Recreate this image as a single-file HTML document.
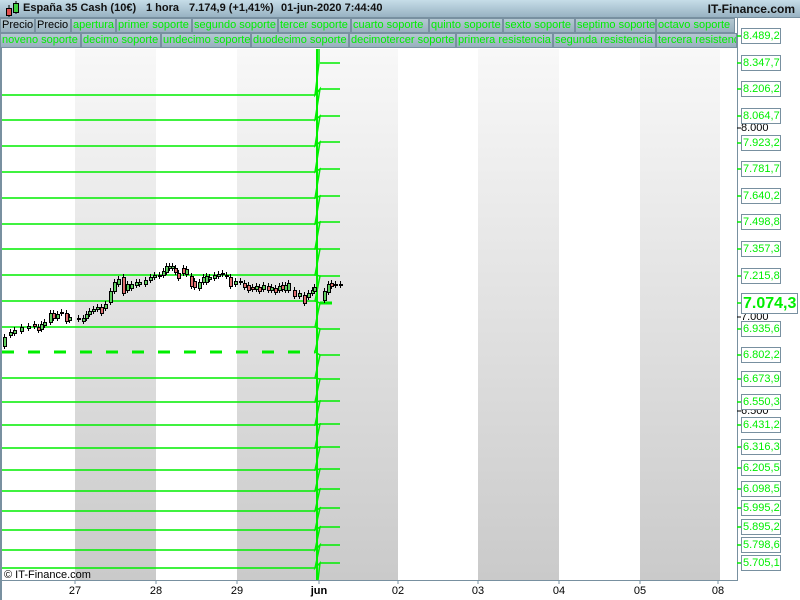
<!DOCTYPE html>
<html><head><meta charset="utf-8"><style>
*{margin:0;padding:0;box-sizing:border-box}
body{width:800px;height:600px;overflow:hidden;background:#fff;font-family:"Liberation Sans",sans-serif;position:relative}
.hdr{position:absolute;left:0;top:0;width:800px;height:18px;background:linear-gradient(#c6dde8,#98b2c2);border-bottom:1px solid #7890a0}
.hdr .t{position:absolute;top:2px;font-size:11px;font-weight:bold;color:#111;white-space:pre}
.hdr .r{position:absolute;right:5px;top:2px;font-size:12px;font-weight:bold;color:#111}
.cell{position:absolute;height:15px;background:linear-gradient(#b4c8d2,#98b0be);border:1px solid #7890a0;font-size:11px;line-height:13px;color:#00ee00;padding-left:1px;white-space:nowrap;overflow:hidden}
.lb{position:absolute;left:741px;width:40px;height:16px;border:1px solid #7890a0;background:#fff;font-size:11px;line-height:14px;color:#00ee00;padding-left:1px}
.ax{position:absolute;left:741px;font-size:11px;color:#000}
.dl{position:absolute;top:585px;font-size:11px;color:#000;transform:translateX(-50%)}
</style></head><body>
<svg width="800" height="600" style="position:absolute;left:0;top:0">
<defs><linearGradient id="g" x1="0" y1="0" x2="0" y2="1"><stop offset="0" stop-color="#f8f8f8"/><stop offset="1" stop-color="#cacaca"/></linearGradient></defs>
<rect x="75" y="49" width="81" height="531" fill="url(#g)"/>
<rect x="237" y="49" width="161" height="531" fill="url(#g)"/>
<rect x="478" y="49" width="81" height="531" fill="url(#g)"/>
<rect x="640" y="49" width="80" height="531" fill="url(#g)"/>
<line x1="1" y1="18" x2="1" y2="600" stroke="#7890a0" stroke-width="2"/>
<line x1="737.5" y1="18" x2="737.5" y2="580" stroke="#7890a0"/>
<line x1="0" y1="580.5" x2="738" y2="580.5" stroke="#7890a0"/>
<g stroke="#7890a0">
<line x1="75" y1="580" x2="75" y2="584"/><line x1="156" y1="580" x2="156" y2="584"/><line x1="237" y1="580" x2="237" y2="584"/><line x1="319" y1="580" x2="319" y2="584"/><line x1="398" y1="580" x2="398" y2="584"/><line x1="478" y1="580" x2="478" y2="584"/><line x1="559" y1="580" x2="559" y2="584"/><line x1="640" y1="580" x2="640" y2="584"/><line x1="718" y1="580" x2="718" y2="584"/>
</g>
<g stroke="#00ee00" stroke-width="1.5">
<line x1="2" x2="315" y1="95" y2="95"/><line x1="2" x2="315" y1="120" y2="120"/><line x1="2" x2="315" y1="146" y2="146"/><line x1="2" x2="315" y1="172" y2="172"/><line x1="2" x2="315" y1="198" y2="198"/><line x1="2" x2="315" y1="224" y2="224"/><line x1="2" x2="315" y1="249" y2="249"/><line x1="2" x2="315" y1="275" y2="275"/><line x1="2" x2="315" y1="301" y2="301"/><line x1="2" x2="315" y1="327" y2="327"/>
<line x1="2" x2="315" y1="352" y2="352" stroke-width="3" stroke-dasharray="12,14"/>
<line x1="2" x2="315" y1="378" y2="378"/><line x1="2" x2="315" y1="402" y2="402"/><line x1="2" x2="315" y1="425" y2="425"/><line x1="2" x2="315" y1="448" y2="448"/><line x1="2" x2="315" y1="470" y2="470"/><line x1="2" x2="315" y1="491" y2="491"/><line x1="2" x2="315" y1="511" y2="511"/><line x1="2" x2="315" y1="530" y2="530"/><line x1="2" x2="315" y1="550" y2="550"/><line x1="2" x2="315" y1="568" y2="568"/>
<line x1="320" x2="340" y1="63" y2="63"/><line x1="320" x2="340" y1="89" y2="89"/><line x1="320" x2="340" y1="116" y2="116"/><line x1="320" x2="340" y1="142" y2="142"/><line x1="320" x2="340" y1="169" y2="169"/><line x1="320" x2="340" y1="196" y2="196"/><line x1="320" x2="340" y1="222" y2="222"/><line x1="320" x2="340" y1="249" y2="249"/><line x1="320" x2="340" y1="276" y2="276"/><line x1="320" x2="340" y1="329" y2="329"/><line x1="320" x2="340" y1="355" y2="355"/><line x1="320" x2="340" y1="379" y2="379"/><line x1="320" x2="340" y1="401" y2="401"/><line x1="320" x2="340" y1="424" y2="424"/><line x1="320" x2="340" y1="447" y2="447"/><line x1="320" x2="340" y1="469" y2="469"/><line x1="320" x2="340" y1="489" y2="489"/><line x1="320" x2="340" y1="508" y2="508"/><line x1="320" x2="340" y1="527" y2="527"/><line x1="320" x2="340" y1="545" y2="545"/><line x1="320" x2="340" y1="563" y2="563"/>
<line x1="320" x2="332" y1="303" y2="303" stroke-width="3"/>
<line x1="317" y1="49" x2="317" y2="580" stroke-width="2"/>
<polyline fill="none" points="319,49 319,63 315,95 320,89 315,120 320,116 315,146 320,142 315,172 320,169 315,198 320,196 315,224 320,222 315,249 320,249 315,275 320,276 315,301 320,303 315,327 320,329 315,352 320,355 315,378 320,379 315,402 320,401 315,425 320,424 315,448 320,447 315,470 320,469 315,491 320,489 315,511 320,508 315,530 320,527 315,550 320,545 315,568 320,563 318,580"/>
</g>
<g stroke="#000" stroke-width="1" id="c"></g>
<text x="4" y="578" font-size="11" font-family="Liberation Sans" fill="#000">© IT-Finance.com</text>
</svg>
<script>
var d=[[3,337,346,1],[9,332,335,1],[13,330,333,1],[20,327,331,1],[27,326,328,1],[33,324,326,0],[37,327,330,0],[40,324,329,1],[43,322,325,1],[49,313,322,1],[52,313,318,0],[56,314,318,1],[60,312,313,1],[65,313,321,0],[68,317,320,1],[77,318,319,1],[82,318,321,1],[85,314,318,1],[88,311,314,1],[92,309,311,1],[96,307,309,1],[100,307,313,0],[104,304,308,1],[109,291,302,1],[113,282,291,1],[117,279,284,1],[122,277,293,0],[126,284,290,1],[130,284,288,1],[135,282,285,1],[138,282,284,1],[144,280,284,1],[149,277,280,1],[153,275,277,1],[158,275,276,1],[162,271,275,1],[165,266,272,1],[168,266,268,1],[171,266,268,1],[174,268,272,0],[177,273,278,0],[182,268,273,0],[185,269,274,1],[190,276,286,0],[193,281,287,0],[198,282,288,1],[202,277,282,1],[205,276,282,1],[208,277,279,1],[213,275,278,1],[217,274,276,1],[221,273,274,1],[225,275,276,1],[229,277,286,0],[234,281,284,1],[239,281,282,1],[243,283,287,0],[247,285,290,0],[251,287,289,0],[255,286,289,1],[258,287,291,0],[262,285,289,1],[267,286,290,0],[270,287,290,1],[274,288,292,0],[278,286,290,1],[281,285,289,0],[284,285,290,1],[287,283,290,1],[293,290,296,0],[298,293,296,1],[303,295,303,0],[307,293,297,1],[311,290,293,1],[313,287,291,1],[323,291,300,1],[327,284,292,1],[330,283,286,0],[334,284,285,1],[339,284,285,1]];
var s='';d.forEach(function(c){s+='<line x1="'+(c[0]+1.5)+'" x2="'+(c[0]+1.5)+'" y1="'+(c[1]-3)+'" y2="'+(c[2]+3)+'"/><rect x="'+c[0]+'.5" y="'+c[1]+'.5" width="3" height="'+Math.max(1,c[2]-c[1])+'" fill="'+(c[3]?'#60d060':'#e07070')+'"/>';});
document.getElementById('c').innerHTML=s;
</script>
<div class="hdr"><svg width="20" height="18" style="position:absolute;left:3px;top:0"><line x1="6" y1="5" x2="6" y2="17" stroke="#000"/><rect x="3.5" y="8.5" width="5" height="7" fill="#e05050" stroke="#000"/><line x1="13" y1="1" x2="13" y2="14" stroke="#000"/><rect x="10.5" y="3.5" width="5" height="9" fill="#40d040" stroke="#000"/></svg><span class="t" style="left:23px">España 35 Cash (10€)</span><span class="t" style="left:146px">1 hora</span><span class="t" style="left:189px">7.174,9 (+1,41%)</span><span class="t" style="left:281px">01-jun-2020 7:44:40</span><span class="r">IT-Finance.com</span></div>
<div class="cell" style="left:0;top:18px;width:35px;color:#000">Precio</div>
<div class="cell" style="left:35px;top:18px;width:36px;color:#000">Precio</div>
<div class="cell" style="left:71px;top:18px;width:45px">apertura</div>
<div class="cell" style="left:116px;top:18px;width:76px">primer soporte</div>
<div class="cell" style="left:192px;top:18px;width:86px">segundo soporte</div>
<div class="cell" style="left:278px;top:18px;width:73px">tercer soporte</div>
<div class="cell" style="left:351px;top:18px;width:78px">cuarto soporte</div>
<div class="cell" style="left:429px;top:18px;width:74px">quinto soporte</div>
<div class="cell" style="left:503px;top:18px;width:72px">sexto soporte</div>
<div class="cell" style="left:575px;top:18px;width:81px">septimo soporte</div>
<div class="cell" style="left:656px;top:18px;width:79px">octavo soporte</div>
<div class="cell" style="left:0;top:33px;width:81px">noveno soporte</div>
<div class="cell" style="left:81px;top:33px;width:80px">decimo soporte</div>
<div class="cell" style="left:161px;top:33px;width:90px">undecimo soporte</div>
<div class="cell" style="left:251px;top:33px;width:98px">duodecimo soporte</div>
<div class="cell" style="left:349px;top:33px;width:107px">decimotercer soporte</div>
<div class="cell" style="left:456px;top:33px;width:97px">primera resistencia</div>
<div class="cell" style="left:553px;top:33px;width:103px">segunda resistencia</div>
<div class="cell" style="left:656px;top:33px;width:81px">tercera resistencia</div>
<svg width="10" height="600" style="position:absolute;left:736px;top:0"><g stroke="#00ee00" stroke-width="1.5"><line x1="1" x2="5" y1="36" y2="36"/><line x1="1" x2="5" y1="63" y2="63"/><line x1="1" x2="5" y1="89" y2="89"/><line x1="1" x2="5" y1="116" y2="116"/><line x1="1" x2="5" y1="143" y2="143"/><line x1="1" x2="5" y1="169" y2="169"/><line x1="1" x2="5" y1="196" y2="196"/><line x1="1" x2="5" y1="222" y2="222"/><line x1="1" x2="5" y1="249" y2="249"/><line x1="1" x2="5" y1="276" y2="276"/><line x1="1" x2="5" y1="303" y2="303"/><line x1="1" x2="5" y1="329" y2="329"/><line x1="1" x2="5" y1="355" y2="355"/><line x1="1" x2="5" y1="379" y2="379"/><line x1="1" x2="5" y1="402" y2="402"/><line x1="1" x2="5" y1="425" y2="425"/><line x1="1" x2="5" y1="447" y2="447"/><line x1="1" x2="5" y1="468" y2="468"/><line x1="1" x2="5" y1="489" y2="489"/><line x1="1" x2="5" y1="508" y2="508"/><line x1="1" x2="5" y1="527" y2="527"/><line x1="1" x2="5" y1="545" y2="545"/><line x1="1" x2="5" y1="563" y2="563"/></g><g stroke="#000"><line x1="1" x2="5" y1="128" y2="128"/><line x1="1" x2="5" y1="317" y2="317"/><line x1="1" x2="5" y1="411" y2="411"/></g></svg>
<div class="ax" style="top:122px">8.000</div>
<div class="ax" style="top:311px">7.000</div>
<div class="ax" style="top:405px">6.500</div>
<div class="lb" style="top:28px">8.489,2</div>
<div class="lb" style="top:55px">8.347,7</div>
<div class="lb" style="top:81px">8.206,2</div>
<div class="lb" style="top:108px">8.064,7</div>
<div class="lb" style="top:135px">7.923,2</div>
<div class="lb" style="top:161px">7.781,7</div>
<div class="lb" style="top:188px">7.640,2</div>
<div class="lb" style="top:214px">7.498,8</div>
<div class="lb" style="top:241px">7.357,3</div>
<div class="lb" style="top:268px">7.215,8</div>
<div class="lb" style="top:293px;width:57px;height:21px;font-size:16px;font-weight:bold;line-height:19px">7.074,3</div>
<div class="lb" style="top:321px">6.935,6</div>
<div class="lb" style="top:347px">6.802,2</div>
<div class="lb" style="top:371px">6.673,9</div>
<div class="lb" style="top:394px">6.550,3</div>
<div class="lb" style="top:417px">6.431,2</div>
<div class="lb" style="top:439px">6.316,3</div>
<div class="lb" style="top:460px">6.205,5</div>
<div class="lb" style="top:481px">6.098,5</div>
<div class="lb" style="top:500px">5.995,2</div>
<div class="lb" style="top:519px">5.895,2</div>
<div class="lb" style="top:537px">5.798,6</div>
<div class="lb" style="top:555px">5.705,1</div>
<div class="dl" style="left:75px">27</div>
<div class="dl" style="left:156px">28</div>
<div class="dl" style="left:237px">29</div>
<div class="dl" style="left:319px;font-weight:bold">jun</div>
<div class="dl" style="left:398px">02</div>
<div class="dl" style="left:478px">03</div>
<div class="dl" style="left:559px">04</div>
<div class="dl" style="left:640px">05</div>
<div class="dl" style="left:718px">08</div>
</body></html>
